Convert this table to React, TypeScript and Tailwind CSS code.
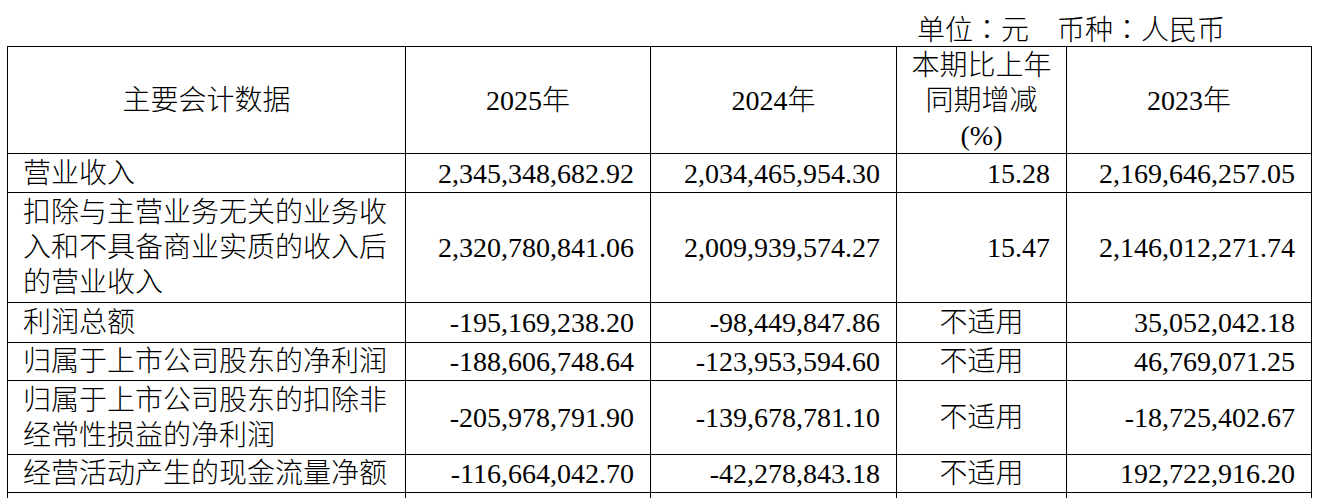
import React from "react";

interface Row {
  label: React.ReactNode;
  y2025: string;
  y2024: string;
  change: string;
  y2023: string;
  h: string;
}

const rows: Row[] = [
  {
    label: "营业收入",
    y2025: "2,345,348,682.92",
    y2024: "2,034,465,954.30",
    change: "15.28",
    y2023: "2,169,646,257.05",
    h: "h-[39px]",
  },
  {
    label: (
      <>
        扣除与主营业务无关的业务收
        <br />
        入和不具备商业实质的收入后
        <br />
        的营业收入
      </>
    ),
    y2025: "2,320,780,841.06",
    y2024: "2,009,939,574.27",
    change: "15.47",
    y2023: "2,146,012,271.74",
    h: "h-[110px]",
  },
  {
    label: "利润总额",
    y2025: "-195,169,238.20",
    y2024: "-98,449,847.86",
    change: "不适用",
    y2023: "35,052,042.18",
    h: "h-[40px]",
  },
  {
    label: "归属于上市公司股东的净利润",
    y2025: "-188,606,748.64",
    y2024: "-123,953,594.60",
    change: "不适用",
    y2023: "46,769,071.25",
    h: "h-[38px]",
  },
  {
    label: (
      <>
        归属于上市公司股东的扣除非
        <br />
        经常性损益的净利润
      </>
    ),
    y2025: "-205,978,791.90",
    y2024: "-139,678,781.10",
    change: "不适用",
    y2023: "-18,725,402.67",
    h: "h-[74px]",
  },
  {
    label: "经营活动产生的现金流量净额",
    y2025: "-116,664,042.70",
    y2024: "-42,278,843.18",
    change: "不适用",
    y2023: "192,722,916.20",
    h: "h-[38px]",
  },
];

const cell = "border border-black p-0 align-middle";
const num = `${cell} text-right pr-[16px]`;
// centred full-width colon, as in the source document
const colon = "font-['Noto_Sans_CJK_TC',sans-serif]";

export default function App() {
  return (
    <div className="h-[498px] w-[1318px] overflow-hidden bg-white text-black font-['Liberation_Serif','Noto_Sans_CJK_SC',serif] font-light text-[28px] leading-[35px]">
      {/* Unit caption */}
      <div className="flex h-[46px] justify-end pr-[93px] pt-[11px]">
        <span>
          单位<span className={colon}>：</span>元　币种<span className={colon}>：</span>人民币
        </span>
      </div>

      <div className="pl-[7px]">
        <table className="w-[1304px] table-fixed border-collapse">
          <colgroup>
            <col className="w-[398px]" />
            <col className="w-[245px]" />
            <col className="w-[246px]" />
            <col className="w-[170px]" />
            <col className="w-[245px]" />
          </colgroup>
          <thead>
            <tr className="h-[107px]">
              <th className={`${cell} text-center font-light`}>主要会计数据</th>
              <th className={`${cell} text-center font-light`}>2025年</th>
              <th className={`${cell} text-center font-light`}>2024年</th>
              <th className={`${cell} text-center font-light`}>
                本期比上年
                <br />
                同期增减
                <br />
                (%)
              </th>
              <th className={`${cell} text-center font-light`}>2023年</th>
            </tr>
          </thead>
          <tbody>
            {rows.map((r, i) => (
              <tr key={i} className={r.h}>
                <td className={`${cell} pl-[15px] text-left`}>{r.label}</td>
                <td className={num}>{r.y2025}</td>
                <td className={num}>{r.y2024}</td>
                <td className={r.change === "不适用" ? `${cell} text-center` : num}>
                  {r.change}
                </td>
                <td className={num}>{r.y2023}</td>
              </tr>
            ))}
            {/* next row, cut off by the frame */}
            <tr className="h-[40px]">
              <td className={cell}>&nbsp;</td>
              <td className={cell}></td>
              <td className={cell}></td>
              <td className={cell}></td>
              <td className={cell}></td>
            </tr>
          </tbody>
        </table>
      </div>
    </div>
  );
}
